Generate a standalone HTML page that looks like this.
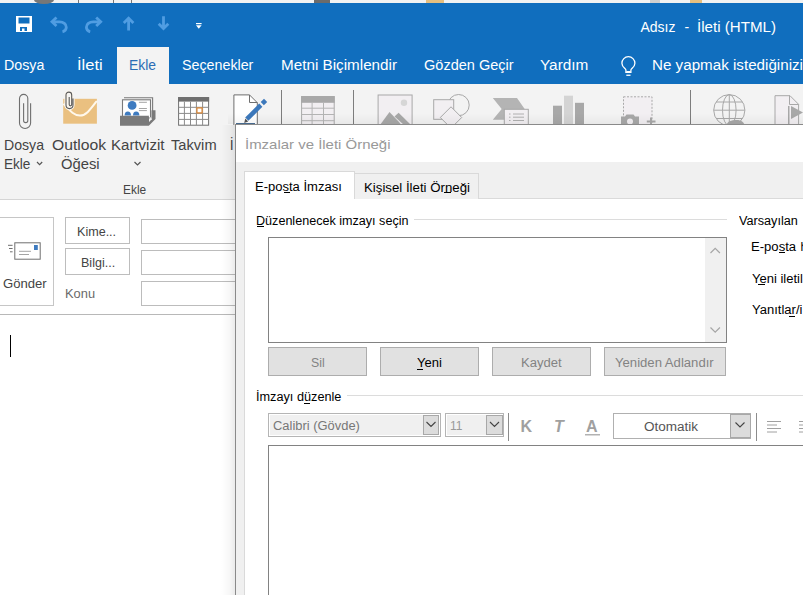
<!DOCTYPE html>
<html><head><meta charset="utf-8">
<style>
html,body{margin:0;padding:0;width:803px;height:595px;overflow:hidden;background:#fff;}
body{position:relative;font-family:"Liberation Sans",sans-serif;}
.a{position:absolute;box-sizing:border-box;}
.t{position:absolute;white-space:nowrap;line-height:1;transform-origin:0 0;}
svg{position:absolute;left:0;top:0;}
.btn{background:#e1e1e1;border:1px solid #adadad;}
</style></head>
<body>
<!-- top strip (window behind) -->
<div class="a" style="left:0;top:0;width:803px;height:4px;background:#f2f2f2;"></div>
<div class="a" style="left:0;top:3px;width:803px;height:81px;background:#106ebe;"></div>
<!-- selected tab -->
<div class="a" style="left:117px;top:47px;width:52px;height:37px;background:#f3f3f3;"></div>
<!-- ribbon -->
<div class="a" style="left:0;top:84px;width:803px;height:116px;background:#f3f3f3;border-bottom:1px solid #d5d5d5;"></div>

<svg width="803" height="200" viewBox="0 0 803 200">
 <!-- top strip bits -->
 <g fill="#777">
  <path d="M34 0 H54 A10 4 0 0 1 34 0Z"/>
  <rect x="78" y="0" width="1" height="3"/>
  <rect x="113" y="0" width="1" height="3"/>
  <rect x="131" y="0" width="1" height="3"/>
  <rect x="314" y="0" width="16" height="3" fill="#6b6b6b"/>
  <rect x="426" y="0" width="18" height="3" fill="#e6bf7f"/>
  <rect x="650" y="0" width="10" height="3" fill="#cfcfcf"/>
  <rect x="690" y="0" width="12" height="3" fill="#e6bf7f"/>
 </g>
 <!-- QAT -->
 <g>
  <rect x="16" y="16" width="16" height="16" fill="#fff"/>
  <rect x="18.5" y="17.5" width="11" height="6" fill="#106ebe"/>
  <rect x="20" y="27" width="7" height="4" fill="#106ebe"/>
  <rect x="22" y="28.5" width="2.5" height="2.5" fill="#fff"/>
 </g>
 <g fill="none" stroke="#509de2" stroke-width="2.8" stroke-linejoin="miter">
  <path d="M56.5 17.5 L52 21.8 L56.5 26.1"/>
  <path d="M52.5 21.8 H59.5 C63.5 21.8 66.3 24.3 66.3 27.3 C66.3 29.8 64.8 31.2 62.5 31.8"/>
  <path d="M96.2 17.5 L100.7 21.8 L96.2 26.1"/>
  <path d="M100.2 21.8 H93.2 C89.2 21.8 86.4 24.3 86.4 27.3 C86.4 29.8 87.9 31.2 90.2 31.8"/>
  <path d="M128.6 30.6 V18.2 M123.8 23 L128.6 18.2 L133.4 23"/>
  <path d="M163.5 16.2 V28.6 M158.7 23.8 L163.5 28.6 L168.3 23.8"/>
 </g>
 <rect x="196" y="23" width="5.6" height="1.2" fill="#fff"/>
 <path d="M196 25.3 H201.6 L198.8 28.8Z" fill="#fff"/>
 <!-- lightbulb -->
 <path d="M625.9 72.3 V70 C625.9 68.6 621.9 67.2 621.9 63.2 A6.5 6.5 0 0 1 634.9 63.2 C634.9 67.2 630.9 68.6 630.9 70 V72.3 Z" fill="none" stroke="#fff" stroke-width="1.3"/>
 <rect x="626.3" y="71" width="4.2" height="1.4" fill="#fff"/>
 <rect x="626.3" y="74.6" width="4.2" height="1.3" fill="#fff"/>

 <!-- paperclip -->
 <path d="M23.6 103.2 V120.5 A2.1 2.1 0 0 0 27.8 120.5 V98.5 A4.15 4.15 0 0 0 19.5 98.5 V123 A5.55 5.55 0 0 0 30.6 123 V103.2" fill="none" stroke="#6f6f6f" stroke-width="1.1"/>
 <!-- outlook item -->
 <rect x="63.2" y="98.8" width="33.7" height="24.9" fill="#eac080"/>
 <path d="M63.5 103.8 C70 110.8 74 115.6 80 115.6 C86 115.6 90 110 96.8 101" fill="none" stroke="#fff8ec" stroke-width="2"/>
 <path d="M69.2 97 V104.6 A1.25 1.25 0 0 0 71.7 104.6 V95 A2.85 2.85 0 0 0 66 95 V105.1 A3.5 3.5 0 0 0 73 105.1 V98.5" fill="none" stroke="#fbf6ee" stroke-width="3.2"/>
 <path d="M69.2 97 V104.6 A1.25 1.25 0 0 0 71.7 104.6 V95 A2.85 2.85 0 0 0 66 95 V105.1 A3.5 3.5 0 0 0 73 105.1 V98.5" fill="none" stroke="#5a5a5a" stroke-width="1.1"/>
 <!-- kartvizit -->
 <path d="M124 97.7 H152.6 V111" fill="none" stroke="#7a7a7a" stroke-width="1.1"/>
 <rect x="122.5" y="99.8" width="28" height="18" fill="#fff" stroke="#7a7a7a" stroke-width="1.1"/>
 <circle cx="132.1" cy="105.4" r="4.4" fill="#3e7bc0"/>
 <path d="M124.6 115.5 A3.2 4 0 0 1 131 115.5Z M133 115.5 A3.2 4 0 0 1 139.4 115.5Z" fill="#3e7bc0"/>
 <path d="M138.9 102.3 H146.9 M138.9 108.5 H146.9 M138.9 110.6 H146.9" stroke="#9a9a9a" stroke-width="0.9"/>
 <path d="M120 115.7 H149 V122 L151.5 119.5 V110.2 H155.5 V119 L148.8 125.7 H120Z" fill="#7a7a7a"/>
 <path d="M149 116 L151.5 119.5" stroke="#fff" stroke-width="1"/>
 <!-- calendar -->
 <rect x="178.6" y="97.6" width="30" height="27.6" fill="#fff" stroke="#6f6f6f" stroke-width="1"/>
 <rect x="178.1" y="97.1" width="31" height="4.5" fill="#6f6f6f"/>
 <path d="M184.4 101.6 V125 M190.5 101.6 V125 M196.4 101.6 V125 M202.6 101.6 V125 M178.6 107.3 H208.6 M178.6 113.4 H208.6 M178.6 119.4 H208.6" stroke="#8a8a8a" stroke-width="1"/>
 <rect x="196.9" y="107.9" width="5.2" height="5" fill="#fff" stroke="#d9883a" stroke-width="1.3"/>
 <!-- imza -->
 <path d="M233.9 125 V94.9 H249.5 L257.3 102.7 V125" fill="#fff" stroke="#6f6f6f" stroke-width="1"/>
 <path d="M249.5 94.9 V102.5 H257.3" fill="none" stroke="#6f6f6f" stroke-width="1"/>
 <path d="M246.8 119.2 L260.8 105.2" stroke="#3c78bb" stroke-width="4.5"/>
 <path d="M262.3 103.7 L265.6 100.4" stroke="#3c78bb" stroke-width="4.5"/>
 <path d="M244.2 123 L245.3 118.6 L248.2 121.4Z" fill="#555"/>
 <rect x="236" y="123" width="19" height="1.2" fill="#4a6e94"/>
 <path d="M37 162 L39.6 164.6 L42.2 162 M134.5 162 L137.5 165 L140.5 162" fill="none" stroke="#555" stroke-width="1.2"/>
 <!-- separators -->
 <rect x="281" y="90" width="1" height="35" fill="#7d7d7d"/>
 <rect x="353" y="90" width="1" height="35" fill="#7d7d7d"/>
 <rect x="690" y="90" width="1" height="35" fill="#7d7d7d"/>
 <!-- table -->
 <rect x="301.6" y="96.6" width="32.6" height="29" fill="#f2eff2" stroke="#a8a8a8" stroke-width="1"/>
 <rect x="301.1" y="96.1" width="33.6" height="6.7" fill="#a8a8a8"/>
 <path d="M312.1 102.8 V125 M323.5 102.8 V125 M301.6 108.2 H334.2 M301.6 114.5 H334.2 M301.6 120.7 H334.2" stroke="#b4b4b4" stroke-width="1"/>
 <!-- picture -->
 <rect x="378.1" y="95" width="34" height="32" fill="#f2eff2" stroke="#a8a8a8" stroke-width="1"/>
 <circle cx="404" cy="102.8" r="3.2" fill="#d6d6d6"/>
 <path d="M380 125 L389.5 112 L399 122 L401 124.5Z" fill="#a8a8a8"/>
 <path d="M394.5 116.5 L398.6 112.8 L410 124 L404 125Z" fill="#a8a8a8"/>
 <!-- shapes -->
 <circle cx="458.6" cy="105.1" r="10.6" fill="none" stroke="#a8a8a8" stroke-width="1"/>
 <rect x="433.7" y="99.7" width="20" height="19.6" fill="#f2eff2" stroke="#a8a8a8" stroke-width="1"/>
 <path d="M451 106.8 L461.7 117.5 L451 128.2 L440.3 117.5Z" fill="#f2eff2" stroke="#a8a8a8" stroke-width="1"/>
 <!-- smartart -->
 <path d="M492.8 97.9 H517 L524.7 108.9 L517 119.8 H492.8 L501.7 108.9Z" fill="#b4b4b4"/>
 <rect x="504.3" y="109.3" width="24" height="18" fill="#f2eff2" stroke="#a8a8a8" stroke-width="1"/>
 <path d="M509 114 H510.5 M509 117.2 H510.5 M509 120.5 H510.5 M513 114 H524 M513 117.2 H524 M513 120.5 H524" stroke="#a8a8a8" stroke-width="0.9"/>
 <!-- chart -->
 <rect x="553" y="105.7" width="9" height="20" fill="#a8a8a8"/>
 <rect x="564" y="95.7" width="9" height="30" fill="#d4d4d4"/>
 <rect x="575" y="102.8" width="9" height="23" fill="#a8a8a8"/>
 <!-- screenshot -->
 <rect x="623.5" y="96.8" width="28.5" height="28" fill="#f2eff2" stroke="#a8a8a8" stroke-width="1" stroke-dasharray="2 1.5"/>
 <path d="M621 116.5 H625 L626.5 114.5 H633.5 L635 116.5 H639 V126 H621Z" fill="#a8a8a8"/>
 <circle cx="630" cy="121.5" r="3" fill="#f2eff2"/>
 <path d="M651 117.5 V126 M646.8 121.5 H655.5" stroke="#a8a8a8" stroke-width="2"/>
 <!-- globe -->
 <g fill="none" stroke="#a8a8a8" stroke-width="1">
  <circle cx="729.3" cy="110.2" r="15.6"/>
  <ellipse cx="729.3" cy="110.2" rx="6.8" ry="15.6"/>
  <path d="M713.7 110.2 H744.9 M716 102 H742.6 M716 118.5 H742.6 M729.3 94.6 V125.8"/>
 </g>
 <path d="M726 126 C727 121.5 731 120 737 120 C741 120 744 122 745 126Z" fill="#a8a8a8"/>
 <!-- doc play -->
 <path d="M775 127 V95.7 H790 L798.6 104.3 V127" fill="#f2eff2" stroke="#a8a8a8" stroke-width="1"/>
 <path d="M789.5 95.7 V104.5 H798.6" fill="none" stroke="#a8a8a8" stroke-width="1"/>
 <rect x="788" y="106" width="1.5" height="20" fill="#a8a8a8"/>
 <path d="M791 106 L803 112.5 L791 119Z" fill="#a8a8a8"/>
</svg>

<!-- message header -->
<div class="a" style="left:-2px;top:217px;width:56px;height:89px;border:1px solid #c6c6c6;"></div>
<div class="a" style="left:65px;top:217px;width:65px;height:27px;border:1px solid #bdbdbd;"></div>
<div class="a" style="left:65px;top:248px;width:65px;height:27px;border:1px solid #bdbdbd;"></div>
<div class="a" style="left:141px;top:219px;width:120px;height:25px;border:1px solid #bcbcbc;"></div>
<div class="a" style="left:141px;top:250px;width:120px;height:25px;border:1px solid #bcbcbc;"></div>
<div class="a" style="left:141px;top:281px;width:120px;height:25px;border:1px solid #bcbcbc;"></div>
<div class="a" style="left:0;top:314px;width:803px;height:1px;background:#b8b8b8;"></div>
<div class="a" style="left:10px;top:335px;width:1px;height:22px;background:#000;"></div>
<svg width="60" height="270" viewBox="0 0 60 270" style="top:0">
 <rect x="14.8" y="242.8" width="25.4" height="16.4" fill="#fff" stroke="#6f6f6f" stroke-width="1"/>
 <rect x="34" y="245" width="3.8" height="5" fill="#3e7bc0"/>
 <path d="M19 251.3 H31 M19 254.5 H29" stroke="#9a9a9a" stroke-width="0.9"/>
 <path d="M8 245.3 H12.6 M9 248.5 H12.6 M10 251.8 H12.6" stroke="#6f6f6f" stroke-width="1"/>
</svg>

<!-- dialog -->
<div class="a" style="left:221px;top:125px;width:15px;height:470px;background:linear-gradient(to right,rgba(0,0,0,0),rgba(0,0,0,0.035) 60%,rgba(0,0,0,0.09));"></div>
<div class="a" style="left:228px;top:113px;width:575px;height:11px;background:linear-gradient(to bottom,rgba(0,0,0,0),rgba(0,0,0,0.045));"></div>
<div class="a" style="left:235px;top:124px;width:568px;height:471px;background:#fff;border-left:1px solid #8a8a8a;border-top:1px solid #8a8a8a;"></div>
<div class="a" style="left:236px;top:162px;width:567px;height:433px;background:#f0f0f0;"></div>
<!-- tab panel -->
<div class="a" style="left:244px;top:198px;width:559px;height:397px;background:#fff;border-left:1px solid #dadada;border-top:1px solid #dadada;"></div>
<div class="a" style="left:354px;top:173px;width:125px;height:26px;background:#f0f0f0;border:1px solid #d9d9d9;border-bottom:none;"></div>
<div class="a" style="left:244px;top:171px;width:111px;height:28px;background:#fff;border:1px solid #d9d9d9;border-bottom:none;"></div>
<div class="a" style="left:284px;top:192px;width:6px;height:1px;background:#000;"></div>
<div class="a" style="left:444.3px;top:192px;width:7px;height:1px;background:#000;"></div>

<div class="a" style="left:256.5px;top:226px;width:7px;height:1px;background:#000;"></div>
<div class="a" style="left:414px;top:219px;width:313px;height:1px;background:#dcdcdc;"></div>
<div class="a" style="left:268px;top:237px;width:459px;height:106px;border:1px solid #828282;background:#fff;"></div>
<div class="a" style="left:705px;top:238px;width:21px;height:104px;background:#f0f0f0;"></div>
<svg width="803" height="595" viewBox="0 0 803 595">
 <path d="M710.5 253 L715.2 248.3 L719.9 253 M710.5 327.5 L715.2 332.2 L719.9 327.5" fill="none" stroke="#a6a6a6" stroke-width="1.2"/>
</svg>
<div class="a" style="left:779.3px;top:252.2px;width:5.6px;height:1px;background:#000;"></div>
<div class="a" style="left:758.1px;top:284px;width:6.8px;height:1px;background:#000;"></div>
<div class="a" style="left:789.2px;top:316px;width:5.7px;height:1px;background:#000;"></div>

<div class="a btn" style="left:268px;top:347px;width:99px;height:29px;"></div>
<div class="a btn" style="left:380px;top:347px;width:99px;height:29px;"></div>
<div class="a btn" style="left:492px;top:347px;width:99px;height:29px;"></div>
<div class="a btn" style="left:604px;top:347px;width:122px;height:29px;"></div>
<div class="a" style="left:417px;top:368.5px;width:6px;height:1px;background:#000;"></div>

<div class="a" style="left:346.5px;top:395px;width:457px;height:1px;background:#dcdcdc;"></div>
<div class="a" style="left:304px;top:403px;width:6px;height:1px;background:#000;"></div>

<!-- font toolbar -->
<div class="a" style="left:268px;top:413px;width:173px;height:24px;border:1px solid #b5b5b5;background:#fff;"></div>
<div class="a" style="left:270px;top:415px;width:153px;height:20px;background:#f0f0f0;"></div>
<div class="a" style="left:423px;top:415px;width:16px;height:20px;background:#dcdcdc;border:1px solid #a8a8a8;"></div>
<div class="a" style="left:445px;top:413px;width:59px;height:24px;border:1px solid #b5b5b5;background:#fff;"></div>
<div class="a" style="left:447px;top:415px;width:39px;height:20px;background:#f0f0f0;"></div>
<div class="a" style="left:486px;top:415px;width:17px;height:20px;background:#dcdcdc;border:1px solid #a8a8a8;"></div>
<div class="a" style="left:508px;top:413px;width:1px;height:28px;background:#8c8c8c;"></div>
<div class="a" style="left:613px;top:413px;width:138px;height:26px;border:1px solid #b0b0b0;background:#fff;"></div>
<div class="a" style="left:729.5px;top:414px;width:21px;height:24px;background:#dcdcdc;border:1px solid #a8a8a8;"></div>
<div class="a" style="left:755.5px;top:413px;width:1px;height:28px;background:#8c8c8c;"></div>
<svg width="803" height="595" viewBox="0 0 803 595">
 <path d="M426.5 422 L431 426.5 L435.5 422 M490 422 L494.5 426.5 L499 422 M735.5 422.5 L740 427 L744.5 422.5" fill="none" stroke="#444" stroke-width="1.1"/>
 <path d="M767 421.5 H781 M767 425 H777 M767 428.5 H781 M767 432 H777" stroke="#a0a0a0" stroke-width="1"/>
 <path d="M799 421.5 H803 M799 425 H803 M799 428.5 H803 M799 432 H803" stroke="#a0a0a0" stroke-width="1"/>
 <rect x="585" y="434.2" width="15" height="1.2" fill="#a0a0a0"/>
</svg>
<div class="t" style="left:520.5px;top:419.3px;font-size:16px;font-weight:bold;color:#a0a0a0;">K</div>
<div class="t" style="left:554px;top:419.3px;font-size:16px;font-weight:bold;font-style:italic;color:#a0a0a0;">T</div>
<div class="t" style="left:586px;top:419.3px;font-size:16px;font-weight:bold;color:#a0a0a0;">A</div>
<div class="a" style="left:268px;top:445px;width:540px;height:160px;border:1px solid #828282;background:#fff;"></div>
<div class="t" style="left:640.40px;top:19.50px;font-size:14px;color:#fff;">Adsız</div>
<div class="t" style="left:684.40px;top:19.50px;font-size:14px;color:#fff;">-</div>
<div class="t" style="left:697.22px;top:19.50px;font-size:14px;color:#fff;transform:scaleX(1.0803);">İleti (HTML)</div>
<div class="t" style="left:4.48px;top:58.30px;font-size:14px;color:#fff;transform:scaleX(1.0179);">Dosya</div>
<div class="t" style="left:76.62px;top:58.30px;font-size:14px;color:#fff;transform:scaleX(1.1800);">İleti</div>
<div class="t" style="left:128.61px;top:58.30px;font-size:14px;color:#2b6db5;transform:scaleX(0.9923);">Ekle</div>
<div class="t" style="left:182.48px;top:58.30px;font-size:14px;color:#fff;transform:scaleX(1.0188);">Seçenekler</div>
<div class="t" style="left:280.71px;top:58.30px;font-size:14px;color:#fff;transform:scaleX(1.0887);">Metni Biçimlendir</div>
<div class="t" style="left:424.36px;top:58.30px;font-size:14px;color:#fff;transform:scaleX(1.0376);">Gözden Geçir</div>
<div class="t" style="left:540.20px;top:58.30px;font-size:14px;color:#fff;transform:scaleX(1.0976);">Yardım</div>
<div class="t" style="left:651.82px;top:58.30px;font-size:14px;color:#fff;transform:scaleX(1.0841);">Ne yapmak istediğinizi</div>
<div class="t" style="left:3.79px;top:137.80px;font-size:14px;color:#444;transform:scaleX(1.0077);">Dosya</div>
<div class="t" style="left:4.23px;top:157.30px;font-size:14px;color:#444;transform:scaleX(0.9692);">Ekle</div>
<div class="t" style="left:52.28px;top:137.80px;font-size:14px;color:#444;transform:scaleX(1.1234);">Outlook</div>
<div class="t" style="left:60.54px;top:157.30px;font-size:14px;color:#444;transform:scaleX(1.0571);">Öğesi</div>
<div class="t" style="left:111.03px;top:137.80px;font-size:14px;color:#444;transform:scaleX(1.0735);">Kartvizit</div>
<div class="t" style="left:170.90px;top:137.80px;font-size:14px;color:#444;transform:scaleX(1.0465);">Takvim</div>
<div class="t" style="left:229.70px;top:137.80px;font-size:14px;color:#444;">İ</div>
<div class="t" style="left:122.51px;top:183.80px;font-size:12px;color:#444;transform:scaleX(0.9909);">Ekle</div>
<div class="t" style="left:2.65px;top:277.60px;font-size:12.5px;color:#444;transform:scaleX(1.0488);">Gönder</div>
<div class="t" style="left:77.49px;top:225.70px;font-size:12.5px;color:#444;transform:scaleX(1.0054);">Kime...</div>
<div class="t" style="left:80.60px;top:256.90px;font-size:12.5px;color:#444;transform:scaleX(1.0031);">Bilgi...</div>
<div class="t" style="left:64.67px;top:287.90px;font-size:12.5px;color:#6a6a6a;transform:scaleX(1.0286);">Konu</div>
<div class="t" style="left:244.85px;top:137.90px;font-size:13px;color:#999;transform:scaleX(1.1504);">İmzalar ve İleti Örneği</div>
<div class="t" style="left:255.42px;top:180.70px;font-size:12px;color:#000;transform:scaleX(1.0846);">E-posta İmzası</div>
<div class="t" style="left:363.50px;top:181.50px;font-size:12px;color:#000;transform:scaleX(1.1032);">Kişisel İleti Örneği</div>
<div class="t" style="left:255.65px;top:215.00px;font-size:12px;color:#000;transform:scaleX(1.0486);">Düzenlenecek imzayı seçin</div>
<div class="t" style="left:739.40px;top:215.00px;font-size:12px;color:#000;transform:scaleX(1.0545);">Varsayılan</div>
<div class="t" style="left:750.51px;top:240.90px;font-size:12px;color:#000;transform:scaleX(1.0900);">E-posta</div>
<div class="t" style="left:800.50px;top:240.90px;font-size:12px;color:#000;">h</div>
<div class="t" style="left:751.60px;top:272.60px;font-size:12px;color:#000;transform:scaleX(1.0848);">Yeni iletil</div>
<div class="t" style="left:751.50px;top:304.40px;font-size:12px;color:#000;transform:scaleX(1.0848);">Yanıtlar/i</div>
<div class="t" style="left:310.58px;top:356.90px;font-size:12px;color:#838383;transform:scaleX(1.0250);">Sil</div>
<div class="t" style="left:417.10px;top:356.90px;font-size:12px;color:#000;transform:scaleX(1.0864);">Yeni</div>
<div class="t" style="left:520.71px;top:356.90px;font-size:12px;color:#838383;transform:scaleX(1.0889);">Kaydet</div>
<div class="t" style="left:615.10px;top:356.90px;font-size:12px;color:#838383;transform:scaleX(1.0933);">Yeniden Adlandır</div>
<div class="t" style="left:255.74px;top:391.10px;font-size:12px;color:#000;transform:scaleX(1.0582);">İmzayı düzenle</div>
<div class="t" style="left:272.67px;top:420.40px;font-size:12.5px;color:#777;transform:scaleX(1.0337);">Calibri (Gövde)</div>
<div class="t" style="left:450.34px;top:419.70px;font-size:12.5px;color:#999;transform:scaleX(0.9583);">11</div>
<div class="t" style="left:644.42px;top:420.60px;font-size:12.5px;color:#555;transform:scaleX(1.0816);">Otomatik</div>
</body></html>
